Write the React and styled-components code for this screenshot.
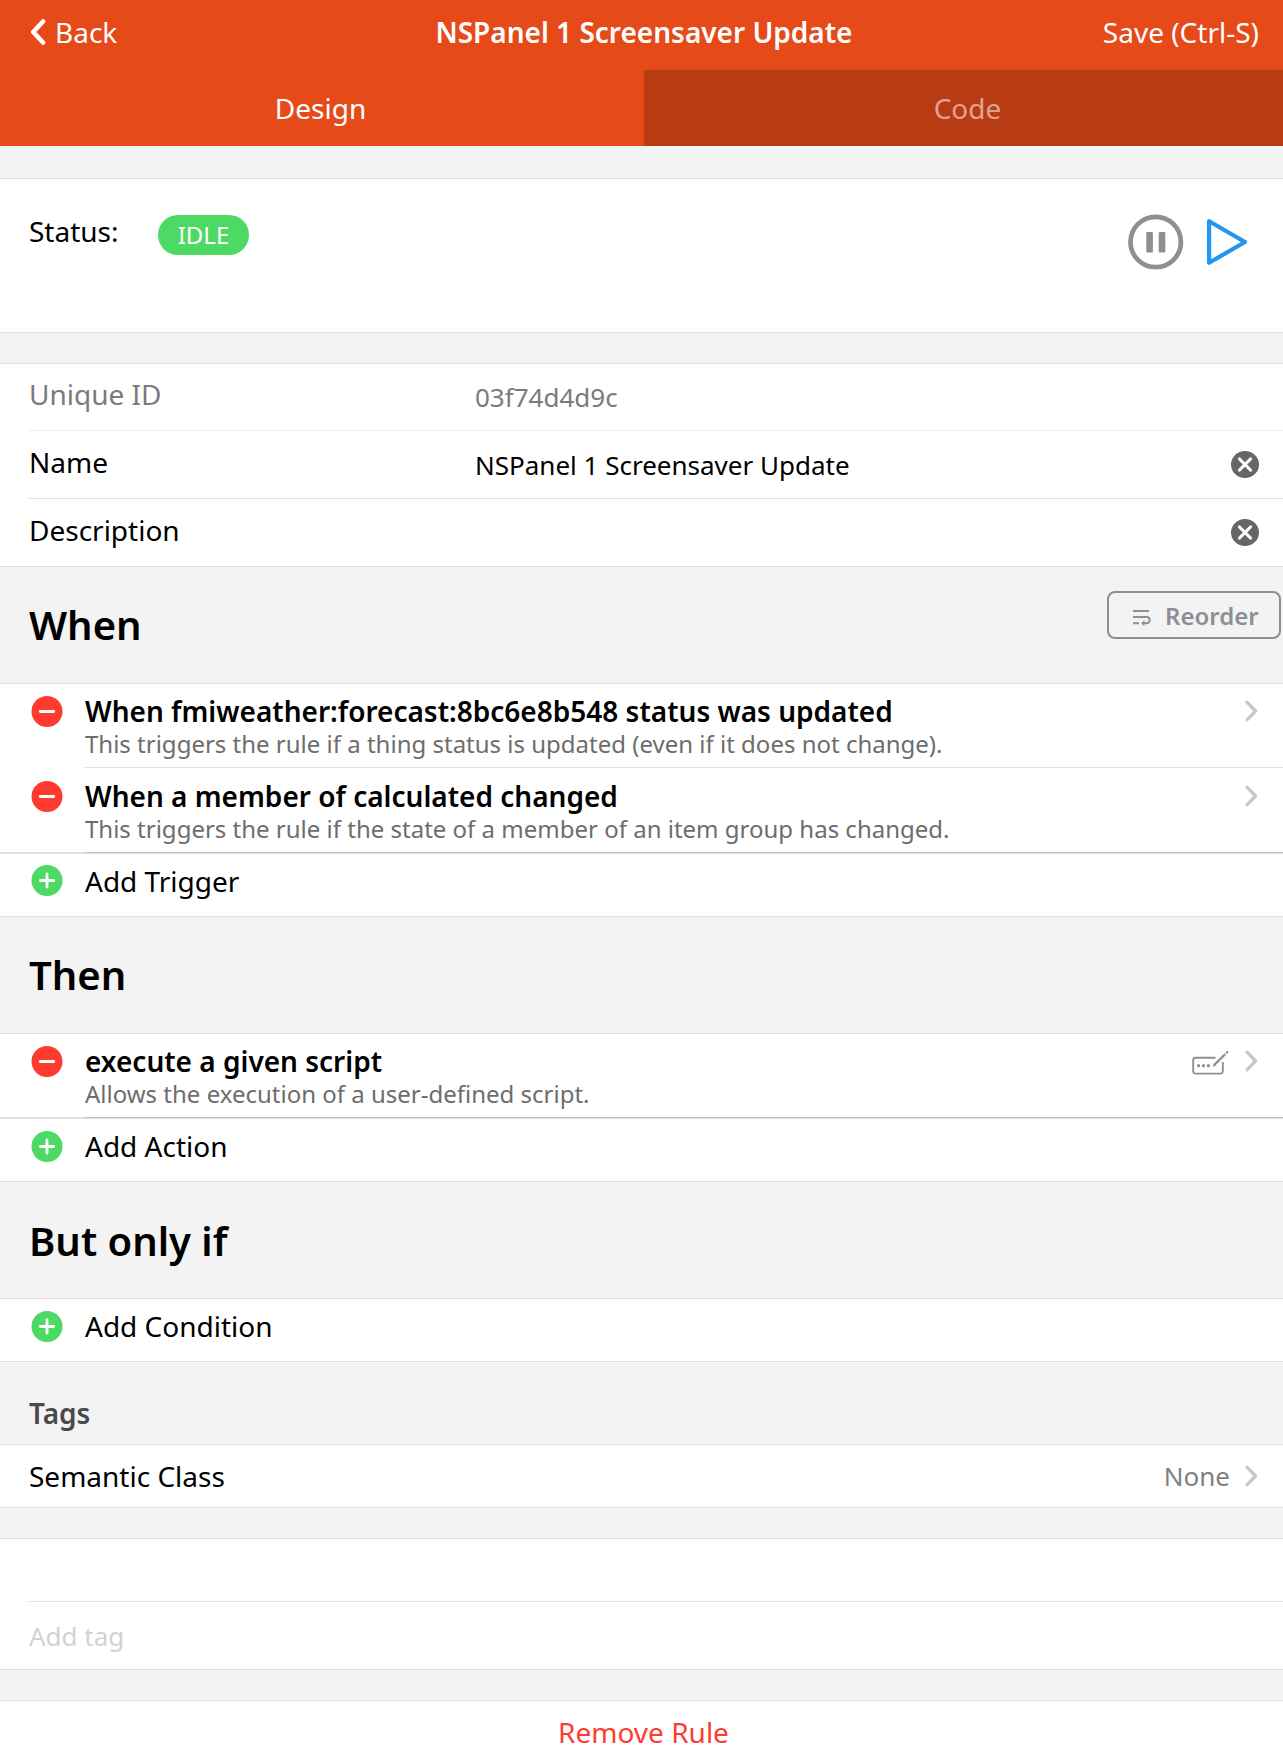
import React from "react";
import styled, { createGlobalStyle } from "styled-components";

const LINE = "#e0e0e0";

const GlobalStyle = createGlobalStyle`
  * { box-sizing: border-box; }
  body {
    margin: 0;
    background: #f3f3f3;
    color: #000;
    font-family: "Noto Sans", "Open Sans", sans-serif;
    font-size: 28px;
    line-height: 38px;
    overflow: hidden;
  }
`;

const Page = styled.div`
  display: flex;
  flex-direction: column;
  width: 1283px;
  height: 1755px;
  overflow: hidden;
`;

const NavBar = styled.header`
  display: grid;
  grid-template-columns: 1fr auto 1fr;
  flex: none;
  height: 70px;
  padding: 13px 24px 0 29px;
  color: #fff;
  background: #e64a19;
`;

const NavLink = styled.a`
  display: flex;
  gap: 9px;
  justify-content: ${(p) => (p.$end ? "flex-end" : "flex-start")};
`;

const NavTitle = styled.div`
  font-weight: 600;
`;

const BackIcon = styled.svg`
  width: 17px;
  height: 28px;
  margin-top: 5px;
`;

const TabBar = styled.nav`
  display: flex;
  flex: none;
  height: 76px;
  background: #e64a19;
`;

const Tab = styled.a`
  width: ${(p) => (p.$active ? 644 : 639)}px;
  padding: ${(p) => (p.$active ? "0 3px 0 0" : "0 0 0 8px")};
  line-height: 76px;
  text-align: center;
  color: ${(p) => (p.$active ? "#fff" : "rgba(255, 255, 255, 0.54)")};
  background: ${(p) => (p.$active ? "transparent" : "#b83b14")};
`;

const Card = styled.section`
  flex: none;
  margin-top: ${(p) => p.$gap || 0}px;
  border-top: 1px solid ${LINE};
  border-bottom: ${(p) => (p.$open ? "none" : `1px solid ${LINE}`)};
  background: #fff;
`;

const StatusRow = styled.div`
  display: flex;
  align-items: flex-start;
  height: 153px;
  padding: 33px 34px 0 29px;
`;

const StatusLabel = styled.div`
  width: 129px;
`;

const Badge = styled.span`
  width: 91px;
  height: 40px;
  margin-top: 3px;
  border-radius: 20px;
  color: #fff;
  background: #4cd964;
  font-size: 24px;
  line-height: 39px;
  text-align: center;
`;

const Actions = styled.div`
  display: flex;
  align-items: center;
  gap: 22px;
  margin: 2px 0 0 auto;
`;

const Row = styled.div`
  display: flex;
  align-items: flex-start;
  height: ${(p) => p.$h}px;
  padding: ${(p) => p.$top || 0}px 24px 0 0;
  margin-left: 29px;
  border-bottom: ${(p) => (p.$line ? `1px solid ${p.$line}` : "none")};
  color: ${(p) => p.$color || "inherit"};
`;

const Label = styled.div`
  width: 446px;
`;

const Value = styled.div`
  padding-top: 4px;
  font-size: 26px;
  line-height: 36px;
`;

const ClearButton = styled.svg`
  width: 28px;
  height: 27px;
  margin: 8px 0 0 auto;
`;

const BlockTitle = styled.div`
  display: flex;
  align-items: flex-start;
  justify-content: space-between;
  flex: none;
  height: 116px;
  padding: ${(p) => p.$top || 31}px 2px 0 29px;
  font-size: 40px;
  font-weight: 600;
  line-height: 54px;
`;

const SmallTitle = styled.div`
  flex: none;
  height: 82px;
  padding: 32px 0 0 29px;
  color: #4a4a4a;
  font-weight: 600;
`;

const ReorderButton = styled.button`
  display: flex;
  align-items: center;
  width: 174px;
  height: 48px;
  margin-top: -7px;
  padding: 1px 0 0 23px;
  border: 2px solid #8e8e93;
  border-radius: 8px;
  color: #8e8e93;
  background: transparent;
  font-family: inherit;
  font-size: 24px;
  font-weight: 600;
  line-height: 33px;
  white-space: nowrap;
`;

const ReorderIcon = styled.svg`
  width: 20px;
  height: 18px;
  margin: 5px 13px 0 0;
`;

const ListRow = styled.div`
  display: flex;
  align-items: flex-start;
  height: ${(p) => p.$h}px;
  padding-top: ${(p) => p.$top || 0}px;
`;

const IconCell = styled.div`
  display: flex;
  width: 85px;
  padding: ${(p) => p.$top}px 0 0 31px;
`;

const RoundIcon = styled.svg`
  width: 32px;
  height: 31px;
`;

const RowBody = styled.div`
  display: flex;
  flex: 1;
  align-self: stretch;
  padding: 8px 25px 0 0;
  border-bottom: ${(p) => (p.$line ? `1px solid ${p.$line}` : "none")};
`;

const RowTexts = styled.div`
  flex: 1;
`;

const RowTitle = styled.div`
  font-weight: 600;
  line-height: 38px;
`;

const RowSubtitle = styled.div`
  margin-top: -3px;
  color: #6d6d6d;
  font-size: 24px;
  line-height: 33px;
`;

const Chevron = styled.svg`
  flex: none;
  width: 13px;
  height: 22px;
  margin-top: ${(p) => p.$top}px;
`;

const EditIcon = styled.svg`
  flex: none;
  width: 38px;
  height: 26px;
  margin: 8px 16px 0 0;
`;

const After = styled.div`
  display: flex;
  gap: 15px;
  margin: 1px 1px 0 auto;
  color: #7f7f7f;
  font-size: 26px;
  line-height: 36px;
`;

const Divider = styled.div`
  display: grid;
  grid-template-columns: 85px 1fr;
  height: 1px;
  background: ${LINE};

  &::after {
    content: "";
    grid-column: 2;
    background: #c3c3c3;
  }
`;

const TagInput = styled.div`
  color: #d2d2d2;
  font-size: 26px;
  line-height: 36px;
`;

const RemoveLink = styled.div`
  height: 70px;
  padding: 12px 0 0 4px;
  color: #ff3b30;
  text-align: center;
`;

function Clear() {
  return (
    <ClearButton viewBox="0 0 28 27">
      <ellipse cx="14" cy="13.5" rx="14" ry="13.5" fill="#666" />
      <path d="M8.4 7.9l11.2 11.2M19.6 7.9L8.4 19.1" stroke="#fff" strokeWidth="2.9" strokeLinecap="round" />
    </ClearButton>
  );
}

function Round({ add }) {
  return (
    <RoundIcon viewBox="0 0 32 31">
      <circle cx="16" cy="15.5" r="15.5" fill={add ? "#4cd964" : "#ff3b30"} />
      <path d={add ? "M9.3 15.5h13.4M16 8.8v13.4" : "M9.3 15.5h13.4"} stroke="#fff" strokeWidth="2.8" strokeLinecap="round" />
    </RoundIcon>
  );
}

function Next({ top }) {
  return (
    <Chevron viewBox="0 0 13 22" $top={top}>
      <path d="M2 2.2L10.6 11L2 19.8" fill="none" stroke="#c8c8cb" strokeWidth="3.3" strokeLinecap="round" strokeLinejoin="round" />
    </Chevron>
  );
}

function ScriptEdit() {
  return (
    <EditIcon viewBox="0 0 38 26" fill="none" stroke="#8e8e93" strokeWidth="2">
      <path d="M24.5 7.8H4.5a2.3 2.3 0 0 0-2.3 2.3v11.2a2.3 2.3 0 0 0 2.3 2.3h25a2.3 2.3 0 0 0 2.3-2.3V12" strokeWidth="1.9" />
      <path d="M23 15.3l11.2-11.2" strokeWidth="2.2" />
      <path d="M35.6 2.7l.8-.8" strokeLinecap="round" />
      <path d="M22.2 16.4l2.6-1.4-1.2-1.2z" strokeWidth="0.6" fill="#8e8e93" />
      <g fill="#8e8e93" stroke="none">
        <circle cx="7.6" cy="15.7" r="1.6" />
        <circle cx="12.5" cy="15.7" r="1.6" />
        <circle cx="17.4" cy="15.7" r="1.6" />
      </g>
    </EditIcon>
  );
}

function Item({ h, top, title, subtitle, line, script }) {
  return (
    <ListRow $h={h} $top={top}>
      <IconCell $top={12}>
        <Round />
      </IconCell>
      <RowBody $line={line}>
        <RowTexts>
          <RowTitle>{title}</RowTitle>
          <RowSubtitle>{subtitle}</RowSubtitle>
        </RowTexts>
        {script && <ScriptEdit />}
        <Next top={8} />
      </RowBody>
    </ListRow>
  );
}

function AddRow({ label, iconTop = 12, h = 62 }) {
  return (
    <ListRow $h={h}>
      <IconCell $top={iconTop}>
        <Round add />
      </IconCell>
      <RowBody>{label}</RowBody>
    </ListRow>
  );
}

export default function App() {
  return (
    <>
      <GlobalStyle />
      <Page>
        <NavBar>
          <NavLink>
            <BackIcon viewBox="0 0 17 28">
              <path d="M14 3.5L4.2 14L14 24.5" fill="none" stroke="#fff" strokeWidth="4.6" strokeLinecap="round" strokeLinejoin="round" />
            </BackIcon>
            Back
          </NavLink>
          <NavTitle>NSPanel 1 Screensaver Update</NavTitle>
          <NavLink $end>Save (Ctrl-S)</NavLink>
        </NavBar>
        <TabBar>
          <Tab $active>Design</Tab>
          <Tab>Code</Tab>
        </TabBar>

        <Card $gap={32}>
          <StatusRow>
            <StatusLabel>Status:</StatusLabel>
            <Badge>IDLE</Badge>
            <Actions>
              <svg width="56" height="56" viewBox="0 0 56 56">
                <circle cx="27.7" cy="28" r="25.2" fill="none" stroke="#8e8e93" strokeWidth="4.7" />
                <rect x="18.3" y="18" width="6.6" height="20.4" rx="1" fill="#8e8e93" />
                <rect x="30.7" y="18" width="6.6" height="20.4" rx="1" fill="#8e8e93" />
              </svg>
              <svg width="43" height="48" viewBox="0 0 43 48">
                <path d="M3.1 3.2L39 24L3.1 44.8z" fill="none" stroke="#2196f3" strokeWidth="4.2" strokeLinejoin="round" />
              </svg>
            </Actions>
          </StatusRow>
        </Card>

        <Card $gap={30}>
          <Row $h={67} $top={11} $line="#eeeeee" $color="#7b7b7b">
            <Label>Unique ID</Label>
            <Value>03f74d4d9c</Value>
          </Row>
          <Row $h={68} $top={12} $line={LINE}>
            <Label>Name</Label>
            <Value>NSPanel 1 Screensaver Update</Value>
            <Clear />
          </Row>
          <Row $h={67} $top={12}>
            <Label>Description</Label>
            <Clear />
          </Row>
        </Card>

        <BlockTitle>
          When
          <ReorderButton>
            <ReorderIcon viewBox="0 0 20 18" fill="none" stroke="#8e8e93" strokeWidth="1.9">
              <path d="M1 2h16M1 8h13.6a3 3 0 0 1 0 6.2H11M1 14.2h6" />
              <path d="M12.4 11.2L9.2 14.2l3.2 3z" fill="#8e8e93" stroke="none" />
            </ReorderIcon>
            Reorder
          </ReorderButton>
        </BlockTitle>

        <Card $open>
          <Item
            h={84}
            title="When fmiweather:forecast:8bc6e8b548 status was updated"
            subtitle="This triggers the rule if a thing status is updated (even if it does not change)."
            line={LINE}
          />
          <Item
            h={84}
            top={1}
            title="When a member of calculated changed"
            subtitle="This triggers the rule if the state of a member of an item group has changed."
          />
          <Divider />
        </Card>
        <Card>
          <AddRow label="Add Trigger" iconTop={11} />
        </Card>

        <BlockTitle>Then</BlockTitle>

        <Card $open>
          <Item
            h={83}
            title="execute a given script"
            subtitle="Allows the execution of a user-defined script."
            script
          />
          <Divider />
        </Card>
        <Card>
          <AddRow label="Add Action" />
        </Card>

        <BlockTitle $top={32}>But only if</BlockTitle>

        <Card>
          <AddRow label="Add Condition" />
        </Card>

        <SmallTitle>Tags</SmallTitle>
        <Card>
          <Row $h={62} $top={12}>
            Semantic Class
            <After>
              None
              <Next top={7} />
            </After>
          </Row>
        </Card>

        <Card $gap={30}>
          <Row $h={63} $line={LINE} />
          <Row $h={67} $top={16}>
            <TagInput>Add tag</TagInput>
          </Row>
        </Card>

        <Card $gap={30}>
          <RemoveLink>Remove Rule</RemoveLink>
        </Card>
      </Page>
    </>
  );
}
